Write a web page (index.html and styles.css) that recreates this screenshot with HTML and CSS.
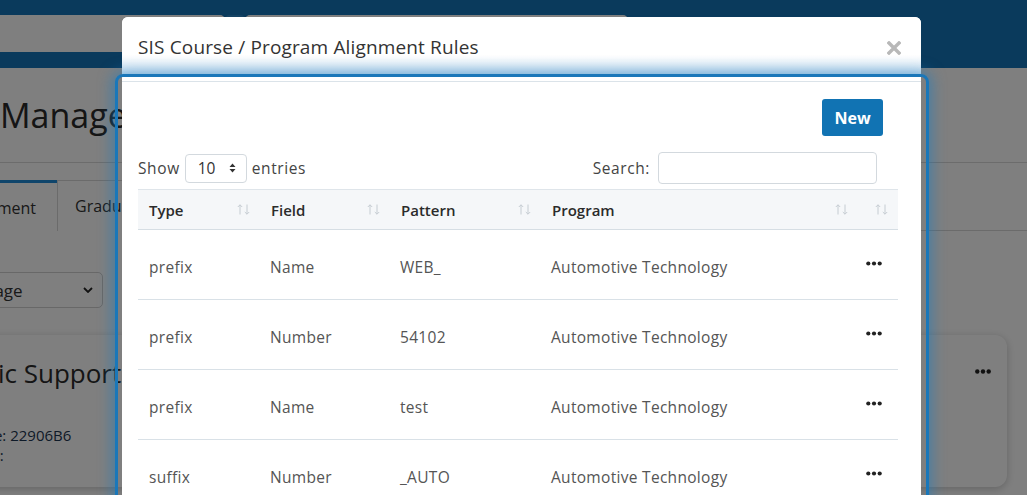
FILE: index.html
```html
<!DOCTYPE html>
<html lang="en">
<head>
<meta charset="utf-8">
<title>SIS Course / Program Alignment Rules</title>
<link rel="stylesheet" href="styles.css">
</head>
<body>
<div class="page">
  <header class="navbar">
    <div class="nav-input nav-input-a"></div>
    <div class="nav-bump"></div>
    <div class="nav-input nav-input-b"></div>
  </header>
  <main class="content">
    <div class="page-head">
      <h1 class="page-title">Manage Programs</h1>
    </div>
    <ul class="tabs">
      <li class="tab tab-active">Alignment</li>
      <li class="tab">Graduation</li>
    </ul>
    <div class="filter">
      <div class="page-select">
        <span class="page-select-text">Language</span>
        <svg class="chev" width="10" height="6" viewBox="0 0 10 6"><polyline points="1,1 5,5 9,1" fill="none" stroke="#222" stroke-width="1.8"/></svg>
      </div>
    </div>
    <section class="card">
      <div class="card-text">
        <h2 class="card-title">Academic Support</h2>
        <p class="card-line">Course Code: 22906B6</p>
        <p class="card-line">Course Type:</p>
      </div>
      <svg class="dots" width="16" height="5" viewBox="0 0 16 5"><circle cx="2.3" cy="2.5" r="2.2"/><circle cx="8" cy="2.5" r="2.2"/><circle cx="13.7" cy="2.5" r="2.2"/></svg>
    </section>
  </main>
</div>

<div class="backdrop"></div>

<div class="modal">
  <div class="modal-header">
    <h3 class="modal-title">SIS Course / Program Alignment Rules</h3>
    <svg class="close" width="14" height="14" viewBox="0 0 14 14"><path d="M2 2 L12 12 M12 2 L2 12" stroke="#b8b8b8" stroke-width="3.4" stroke-linecap="square"/></svg>
  </div>
  <div class="modal-body">
    <div class="body-inner">
      <div class="toolbar">
        <button class="btn-new">New</button>
      </div>
      <div class="controls">
        <label class="length">Show
          <span class="len-select">10
            <svg width="7" height="10" viewBox="0 0 7 10"><path d="M3.5 0.5 L6.5 4 L0.5 4 Z M3.5 9.5 L6.5 6 L0.5 6 Z" fill="#333"/></svg>
          </span>
          entries</label>
        <label class="search">Search: <span class="search-input"></span></label>
      </div>
      <table class="rules">
        <colgroup>
          <col class="c-type"><col class="c-field"><col class="c-pattern"><col class="c-program"><col class="c-act">
        </colgroup>
        <thead>
          <tr>
            <th><div class="th-in">Type<svg class="sort" width="13" height="11" viewBox="0 0 13 11"><path d="M3 10.5 V0.8 M0.8 3 L3 0.8 L5.2 3 M10 0.5 V10.2 M7.8 8 L10 10.2 L12.2 8" fill="none" stroke="#c5ccd2" stroke-width="1"/></svg></div></th>
            <th><div class="th-in">Field<svg class="sort" width="13" height="11" viewBox="0 0 13 11"><path d="M3 10.5 V0.8 M0.8 3 L3 0.8 L5.2 3 M10 0.5 V10.2 M7.8 8 L10 10.2 L12.2 8" fill="none" stroke="#c5ccd2" stroke-width="1"/></svg></div></th>
            <th><div class="th-in">Pattern<svg class="sort" width="13" height="11" viewBox="0 0 13 11"><path d="M3 10.5 V0.8 M0.8 3 L3 0.8 L5.2 3 M10 0.5 V10.2 M7.8 8 L10 10.2 L12.2 8" fill="none" stroke="#c5ccd2" stroke-width="1"/></svg></div></th>
            <th><div class="th-in">Program<svg class="sort" width="13" height="11" viewBox="0 0 13 11"><path d="M3 10.5 V0.8 M0.8 3 L3 0.8 L5.2 3 M10 0.5 V10.2 M7.8 8 L10 10.2 L12.2 8" fill="none" stroke="#c5ccd2" stroke-width="1"/></svg></div></th>
            <th><div class="th-in th-end"><svg class="sort" width="13" height="11" viewBox="0 0 13 11"><path d="M3 10.5 V0.8 M0.8 3 L3 0.8 L5.2 3 M10 0.5 V10.2 M7.8 8 L10 10.2 L12.2 8" fill="none" stroke="#c5ccd2" stroke-width="1"/></svg></div></th>
          </tr>
        </thead>
        <tbody>
          <tr><td>prefix</td><td>Name</td><td>WEB_</td><td>Automotive Technology</td><td class="act"><svg class="dots" width="16" height="5" viewBox="0 0 16 5"><circle cx="2.3" cy="2.5" r="2.1"/><circle cx="8" cy="2.5" r="2.1"/><circle cx="13.7" cy="2.5" r="2.1"/></svg></td></tr>
          <tr><td>prefix</td><td>Number</td><td>54102</td><td>Automotive Technology</td><td class="act"><svg class="dots" width="16" height="5" viewBox="0 0 16 5"><circle cx="2.3" cy="2.5" r="2.1"/><circle cx="8" cy="2.5" r="2.1"/><circle cx="13.7" cy="2.5" r="2.1"/></svg></td></tr>
          <tr><td>prefix</td><td>Name</td><td>test</td><td>Automotive Technology</td><td class="act"><svg class="dots" width="16" height="5" viewBox="0 0 16 5"><circle cx="2.3" cy="2.5" r="2.1"/><circle cx="8" cy="2.5" r="2.1"/><circle cx="13.7" cy="2.5" r="2.1"/></svg></td></tr>
          <tr><td>suffix</td><td>Number</td><td>_AUTO</td><td>Automotive Technology</td><td class="act"><svg class="dots" width="16" height="5" viewBox="0 0 16 5"><circle cx="2.3" cy="2.5" r="2.1"/><circle cx="8" cy="2.5" r="2.1"/><circle cx="13.7" cy="2.5" r="2.1"/></svg></td></tr>
        </tbody>
      </table>
    </div>
  </div>
</div>

<div class="focus-ring"></div>
</body>
</html>
```

FILE: styles.css
```css
* { box-sizing: border-box; }

html, body {
  margin: 0;
  padding: 0;
  width: 1027px;
  height: 495px;
  overflow: hidden;
  font-family: "Open Sans", "Liberation Sans", sans-serif;
  color: #333;
  background: #fff;
}

/* ---------- background page ---------- */
.page {
  width: 1027px;
}

.navbar {
  height: 68px;
  background: #1474b8;
  display: flex;
  align-items: flex-start;
  padding-top: 15px;
}

.nav-input {
  height: 37px;
  background: #fff;
  border-radius: 5px;
}

.nav-input-a {
  width: 245px;
  margin-left: -20px;
}

.nav-bump {
  width: 18px;
  height: 3px;
  margin: 0 1px;
  background: #2a86c8;
  border-radius: 3px 3px 0 0;
}

.nav-input-b {
  width: 383px;
}

.content {
  background: #fff;
  height: 427px;
}

.page-head {
  height: 95px;
  padding-top: 26px;
  border-bottom: 1px solid #d9d9d9;
}

.page-title {
  margin: 0;
  font-size: 34px;
  line-height: 42px;
  font-weight: 500;
  color: #2a2a2a;
  white-space: nowrap;
}

.tabs {
  list-style: none;
  margin: 17px 0 0 -57px;
  padding: 0;
  display: flex;
  height: 51px;
  border-bottom: 1px solid #d6d6d6;
}

.tab {
  padding: 0 17px;
  font-size: 16px;
  font-weight: 500;
  color: #333;
  display: flex;
  align-items: center;
  border: 1px solid #d6d6d6;
  border-bottom: none;
  height: 51px;
  background: #fff;
}

.tab-active {
  width: 114px;
  border: none;
  border-top: 3px solid #1e8ad6;
  height: 52px;
}

.filter {
  margin-top: 41px;
}

.page-select {
  width: 171px;
  margin-left: -68px;
  height: 36px;
  border: 1px solid #d0d0d0;
  border-radius: 5px;
  display: flex;
  align-items: center;
  justify-content: space-between;
  padding: 0 9px 0 13px;
  font-size: 17px;
  color: #333;
}

.card {
  margin: 27px 20px 0 -60px;
  height: 152px;
  border-radius: 12px;
  background: #fff;
  box-shadow: 0 2px 8px rgba(0, 0, 0, 0.22);
  display: flex;
  justify-content: space-between;
  align-items: flex-start;
  padding: 22px 16px 0 0;
}

.card-title {
  margin: 0 0 0 -40px;
  font-size: 26px;
  line-height: 32px;
  font-weight: 400;
  color: #2a2a2a;
  white-space: nowrap;
}

.card-line {
  margin: 0 0 0 -27px;
  font-size: 15px;
  line-height: 20px;
  color: #1d3550;
  white-space: nowrap;
}

.card-title + .card-line {
  margin-top: 36px;
}

.card .dots {
  margin-top: 12px;
  fill: #222;
}

/* ---------- backdrop ---------- */
.backdrop {
  position: fixed;
  inset: 0;
  background: rgba(0, 0, 0, 0.5);
}

/* ---------- modal ---------- */
.modal {
  position: absolute;
  left: 122px;
  top: 17px;
  width: 799px;
  height: 520px;
  background: #fff;
  border-radius: 6px;
  overflow: hidden;
}

.modal-header {
  height: 58px;
  padding: 0 20px 0 16px;
  display: flex;
  align-items: center;
  justify-content: space-between;
  background: linear-gradient(to bottom, #fff 0%, #fff 66%, #d4e4f1 100%);
}

.modal-title {
  margin: 0;
  font-size: 19px;
  letter-spacing: 0.15px;
  font-weight: 500;
  color: #333;
  padding-top: 2px;
}

.close {
  margin-top: 4px;
}

.modal-body {
  padding-top: 6px;
}

.body-inner {
  border-top: 1px solid #dbe3e9;
  padding: 17px 23px 0 16px;
}

.toolbar {
  display: flex;
  justify-content: flex-end;
}

.btn-new {
  width: 61px;
  height: 37px;
  margin-right: 15px;
  border: none;
  border-radius: 3px;
  background: #1173b3;
  color: #fff;
  font-family: "Open Sans", "Liberation Sans", sans-serif;
  font-size: 16px;
  font-weight: 700;
  padding: 0;
}

.controls {
  margin-top: 16px;
  height: 32px;
  display: flex;
  align-items: center;
  justify-content: space-between;
  font-size: 15.5px;
  letter-spacing: 0.6px;
  color: #444;
}

.length {
  display: flex;
  align-items: center;
  gap: 5px;
}

.len-select {
  width: 62px;
  height: 29px;
  border: 1px solid #d3d9de;
  border-radius: 4px;
  display: flex;
  align-items: center;
  justify-content: space-between;
  padding: 0 10px 0 12px;
  color: #333;
  letter-spacing: 0;
}

.search {
  display: flex;
  align-items: center;
  gap: 8px;
  margin-right: 21px;
}

.search-input {
  width: 219px;
  height: 32px;
  border: 1px solid #d3d9de;
  border-radius: 4px;
  display: block;
}

.rules {
  margin-top: 5px;
  width: 760px;
  border-collapse: collapse;
  table-layout: fixed;
  font-size: 15.5px;
}

.c-type { width: 122px; }
.c-field { width: 130px; }
.c-pattern { width: 151px; }
.c-program { width: 317px; }
.c-act { width: 40px; }

.rules thead tr {
  background: #f5f7f9;
  border-top: 1px solid #dfe5ea;
  border-bottom: 1px solid #d6dee4;
}

.rules th {
  height: 40px;
  padding: 0 10px 0 11px;
  text-align: left;
  font-size: 15px;
  font-weight: 600;
  color: #2b2b2b;
}

.th-in {
  display: flex;
  align-items: center;
  justify-content: space-between;
}

.th-end {
  justify-content: flex-end;
}

.rules td {
  height: 70px;
  padding: 4px 0 0 11px;
  color: #555;
  letter-spacing: 0.3px;
  border-bottom: 1px solid #d9e1e7;
  white-space: nowrap;
}

.rules td:nth-child(2),
.rules td:nth-child(3),
.rules td:nth-child(4) { padding-left: 10px; }

.rules td.act {
  padding: 0 0 0 8px;
}

.rules td .dots {
  display: block;
  fill: #222;
  margin-top: -2px;
}

/* ---------- focus ring over the dialog ---------- */
.focus-ring {
  position: absolute;
  left: 115px;
  top: 74px;
  width: 814px;
  height: 480px;
  border: 3px solid #1a77b9;
  border-radius: 8px;
  box-shadow: 0 0 14px 3px rgba(28, 125, 195, 0.55);
  pointer-events: none;
}
```
